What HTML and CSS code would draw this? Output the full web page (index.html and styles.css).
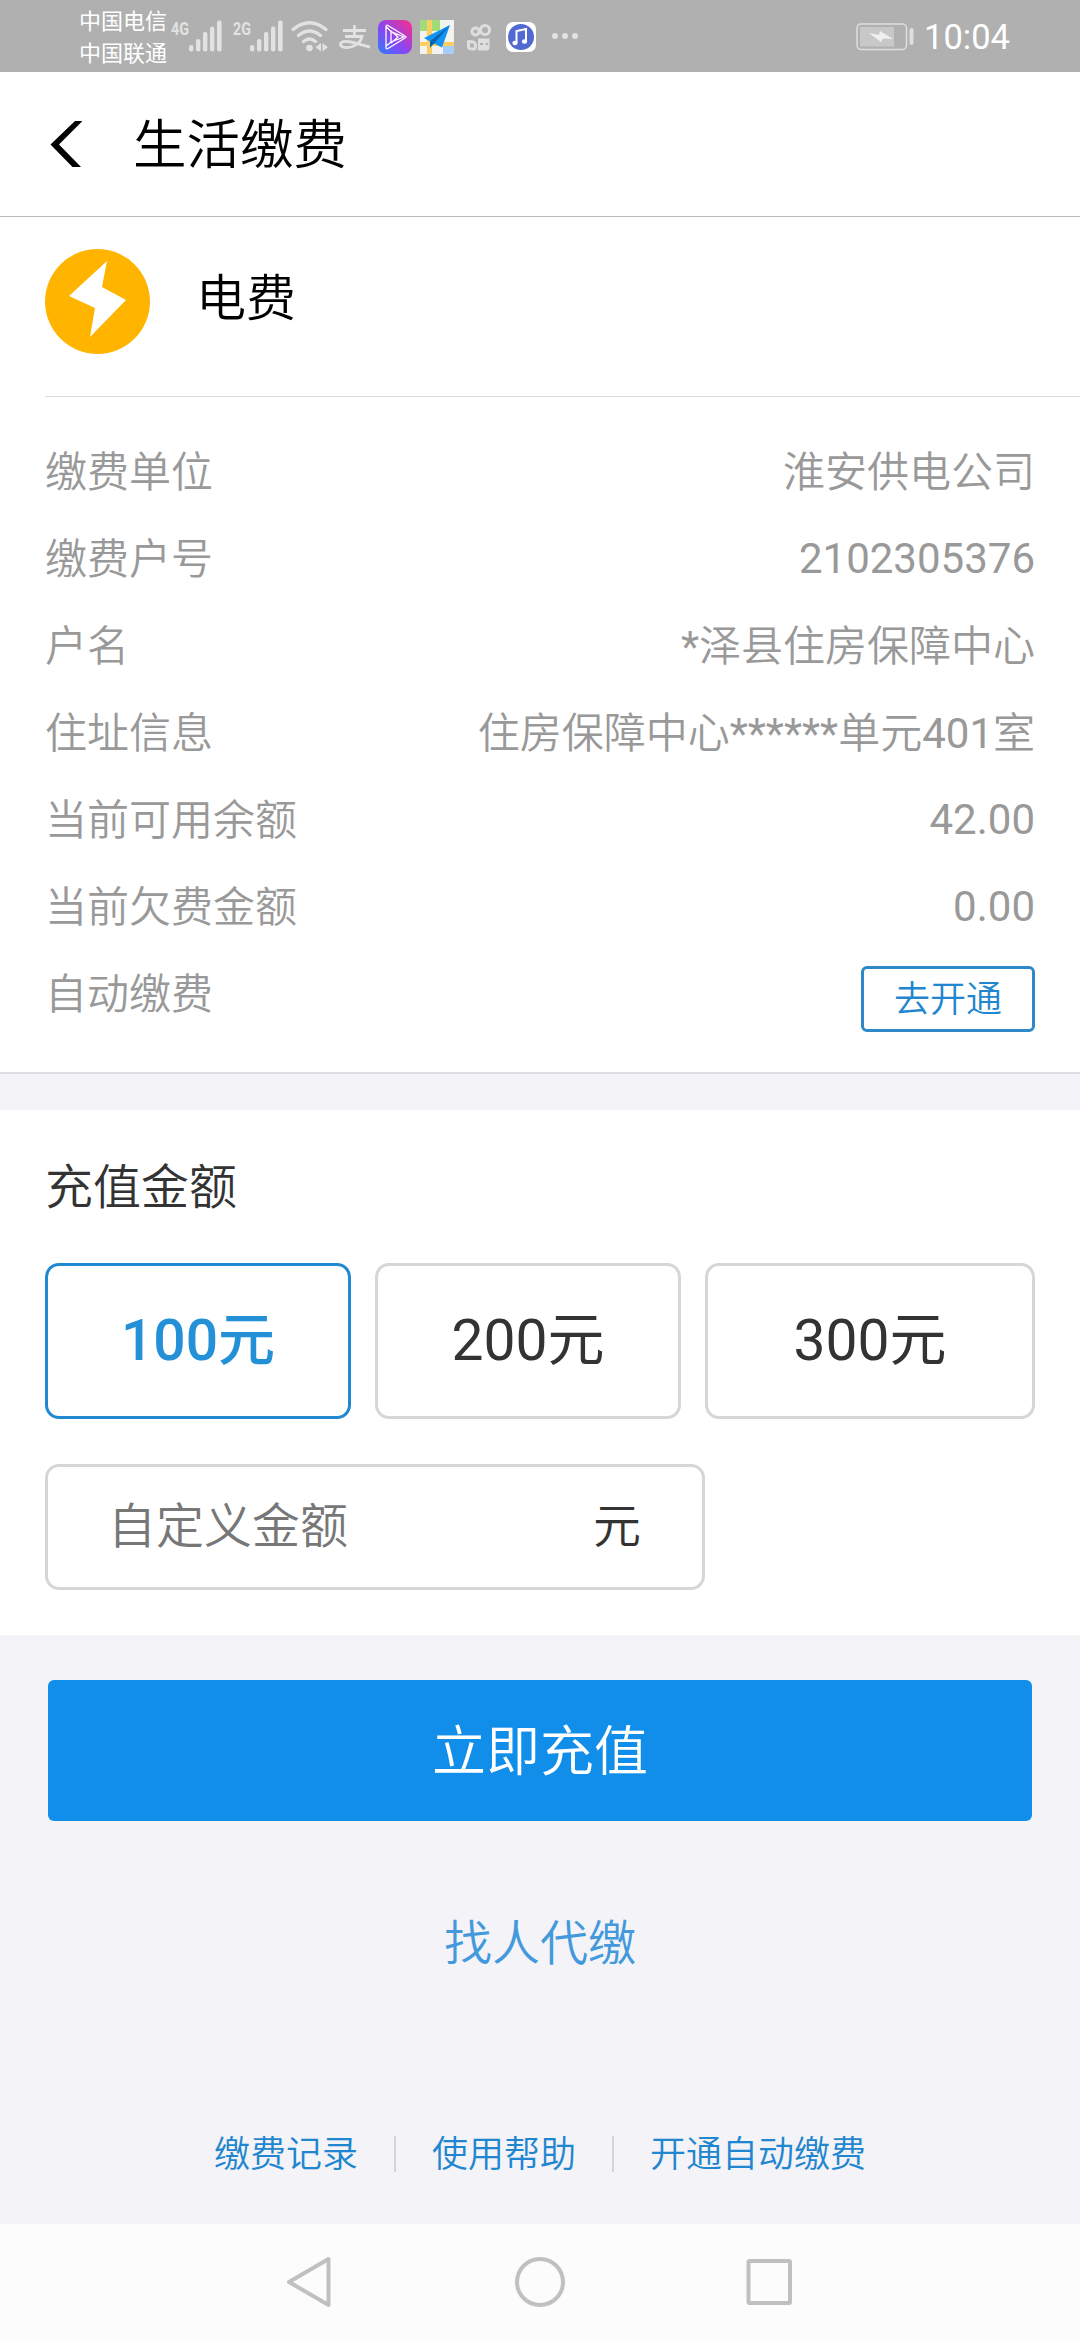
FILE: index.html
```html
<!DOCTYPE html>
<html lang="zh-CN">
<head>
<meta charset="utf-8">
<title>生活缴费</title>
<link rel="stylesheet" href="styles.css">
</head>
<body>
<div class="status">
  <div class="carriers"><span>中国电信</span><span>中国联通</span></div>
  <svg class="status-icons" width="420" height="72" viewBox="170 0 420 72">
    <g fill="#e2e2e2">
      <text class="net" x="171" y="35" textLength="18" lengthAdjust="spacingAndGlyphs">4G</text>
      <rect x="189" y="45" width="4.4" height="6.5" rx="2"/><rect x="196" y="39" width="4.4" height="12.5" rx="2"/><rect x="203" y="32" width="4.4" height="19.5" rx="2"/><rect x="210" y="26.500" width="4.4" height="25" rx="2"/><rect x="217" y="20.500" width="4.6" height="31" rx="2"/>
      <text class="net" x="233" y="35" textLength="18" lengthAdjust="spacingAndGlyphs">2G</text>
      <rect x="250" y="45" width="4.4" height="6.5" rx="2"/><rect x="257" y="39" width="4.4" height="12.500" rx="2"/><rect x="264" y="32" width="4.4" height="19.5" rx="2"/><rect x="271" y="26.500" width="4.4" height="25" rx="2"/><rect x="278" y="20.500" width="4.6" height="31" rx="2"/>
      <circle cx="309.500" cy="48" r="3.300"/>
      <path d="M321 43v8.500l-5.500-4.250zM322.500 43l5.500 4.250-5.500 4.250z"/>
      <circle cx="555" cy="36" r="3"/><circle cx="565" cy="36" r="3"/><circle cx="575" cy="36" r="3"/>
    </g>
    <g fill="none" stroke="#e2e2e2" stroke-width="3.400" stroke-linecap="round">
      <path d="M293 29.500q16.500-13.500 33 0M298.500 35.500q11-9 22 0M303.500 41.500q6-5 12 0"/>
      <path stroke-width="2.800" stroke-linecap="butt" d="M343 30.500h23M354.500 25v11M345 36.500h17C361 43 353 48 346 47.500c-8-.5-7-6.500 1-6 7 0 14 4 23 5.500"/>
    </g>
    <defs>
      <linearGradient id="vid" x1="0" y1="1" x2="1" y2="0"><stop offset="0" stop-color="#2f7bff"/><stop offset=".45" stop-color="#8a45f2"/><stop offset="1" stop-color="#ff2e86"/></linearGradient>
    </defs>
    <rect x="378" y="20" width="34" height="34" rx="8" fill="url(#vid)"/>
    <path d="M386 26.500q0-2 2-1l17 10.500q2 1 0 2l-17 10.500q-2 1-2-1zM386 46l5-4 13-5M391 31v12M386 26.500l5 5 13 5.500M391 31l7 6-7 6" fill="none" stroke="#fff" stroke-width="1.300"/>
    <rect x="420" y="20" width="34" height="34" fill="#f4f3ee"/>
    <path d="M420 20h20v11h-20z" fill="#a0dc78"/><path d="M443 44h11v10h-11z" fill="#a9cdfa"/>
    <path d="M427 20h5v34h-5zM420 42h34v4h-34z" fill="#fdce62"/>
    <path d="M450 25L424 38l6 3.500v6l4-4 8 4z" fill="#1292f5"/><path d="M450 25L430 41.500v6l4-4z" fill="#0763ad"/>
    <g fill="none" stroke="#dedede" stroke-width="3" stroke-linejoin="round">
      <circle cx="475.500" cy="31.500" r="3.600"/><circle cx="485" cy="30" r="4.600"/>
      <path d="M468.500 41.500l5 .5q2 1 2 4t-2 3q-5 0-5-1.500z"/>
    </g>
    <path d="M478 38.500h11.500v9q0 3-3 3H478z" fill="#dedede"/>
    <path d="M480 44h3M486 44h2" stroke="#b0b0b0" stroke-width="2"/>
    <rect x="506" y="22" width="30" height="30" rx="7" fill="#fff"/><circle cx="521" cy="37" r="13" fill="#5269d2"/>
    <path d="M516.500 43V31l9.500-2v12" fill="none" stroke="#fff" stroke-width="2"/><ellipse cx="515" cy="43" rx="2.600" ry="2.200" fill="#fff"/><ellipse cx="524.500" cy="41.500" rx="2.600" ry="2.200" fill="#fff"/>
  </svg>
  <svg class="battery" width="60" height="32" viewBox="855 20 60 32">
    <rect x="857" y="24" width="49.500" height="25.500" rx="4" fill="none" stroke="#dedede" stroke-width="1.500"/>
    <rect x="860" y="27" width="34" height="19.500" fill="#c8c8c8"/>
    <rect x="909.500" y="28" width="4" height="17" rx="2" fill="#dedede"/>
    <path d="M869 33l10 2 1-4 13 8-10-.5-2 3.500z" fill="#f0f0f0"/>
  </svg>
  <span class="time">10:04</span>
</div>
<header class="header">
  <svg class="back" width="32" height="48" viewBox="50 120 32 48"><path d="M75 121h7.500L59 144.500 81 167h-8.500L50.500 144.500z"/></svg>
  <h1>生活缴费</h1>
</header>
<main>
  <section class="account">
    <div class="service">
      <svg width="105" height="105" viewBox="0 0 105 105"><circle cx="52.500" cy="52.500" r="52.500" fill="#ffb400"/><path d="M62 12L24 47l26 12-5 29 36-37-24-13z" fill="#fff"/></svg>
      <h2>电费</h2>
    </div>
    <dl class="details">
      <div><dt>缴费单位</dt><dd>淮安供电公司</dd></div>
      <div><dt>缴费户号</dt><dd class="number">2102305376</dd></div>
      <div><dt>户名</dt><dd>*泽县住房保障中心</dd></div>
      <div><dt>住址信息</dt><dd>住房保障中心******单元401室</dd></div>
      <div><dt>当前可用余额</dt><dd class="number">42.00</dd></div>
      <div><dt>当前欠费金额</dt><dd class="number">0.00</dd></div>
      <div><dt>自动缴费</dt><dd><button class="enable">去开通</button></dd></div>
    </dl>
  </section>
  <section class="recharge">
    <h3>充值金额</h3>
    <div class="amounts">
      <button class="amount selected">100元</button>
      <button class="amount">200元</button>
      <button class="amount">300元</button>
    </div>
    <div class="custom"><span class="placeholder">自定义金额</span><span>元</span></div>
  </section>
  <button class="submit">立即充值</button>
  <a class="delegate">找人代缴</a>
  <nav class="links"><a>缴费记录</a><i></i><a>使用帮助</a><i></i><a>开通自动缴费</a></nav>
</main>
<footer class="navbar">
  <svg width="1080" height="116" viewBox="0 2224 1080 116" fill="none" stroke="#c0c0c0" stroke-width="4" stroke-linejoin="round">
    <path d="M328.500 2259v46L289 2282z"/><circle cx="540" cy="2282" r="23"/><rect x="748.500" y="2261" width="41.500" height="42" rx="1"/>
  </svg>
</footer>
</body>
</html>
```
FILE: styles.css
```css
* { box-sizing: border-box; }
body {
  margin: 0;
  width: 1080px;
  height: 2340px;
  display: flex;
  flex-direction: column;
  overflow: hidden;
  background: #f3f3f8;
  color: #333;
  font-family: Roboto, "Noto Sans CJK SC DemiLight", "Noto Sans CJK SC", sans-serif;
}
h1, h2, h3, dl, dt, dd { margin: 0; font-weight: 400; }
button { font: inherit; padding: 0; background: none; }

.status {
  height: 72px;
  flex: none;
  display: flex;
  align-items: center;
  background: #b0b0b0;
  color: #fff;
  padding-left: 79px;
}
.carriers {
  width: 91px;
  padding-bottom: 2px;
  display: flex;
  flex-direction: column;
  font-family: "Noto Sans CJK SC", sans-serif;
  font-size: 22px;
  line-height: 32px;
}
.status-icons { flex: none; }
.net { font: 700 19px Roboto, sans-serif; }
.battery { margin-left: 265px; }
.time { margin-left: 9px; padding-top: 3px; font-size: 34.5px; line-height: 69px; }

.header {
  height: 145px;
  flex: none;
  display: flex;
  align-items: center;
  padding-left: 50px;
  background: #fff;
  border-bottom: 1px solid #bbb;
  color: #000;
}
.header h1 { margin-left: 51px; padding-top: 3px; font-size: 53.5px; line-height: 80px; }

main { flex: 1; display: flex; flex-direction: column; }
.account { height: 857px; background: #fff; border-bottom: 2px solid #dcdce2; }
.service {
  height: 180px;
  margin-left: 45px;
  padding-top: 32px;
  display: flex;
  gap: 46px;
  border-bottom: 1px solid #ddd;
  color: #000;
}
.service h2 { font-size: 50px; line-height: 100px; }
.details { padding: 32px 45px 0; color: #999; font-size: 42px; line-height: 87px; }
.details div { height: 87px; display: flex; justify-content: space-between; }
.details .number { line-height: 85px; }
.enable {
  display: block;
  width: 174px;
  height: 66px;
  margin-top: 15px;
  border: 3px solid #2f88c8;
  border-radius: 6px;
  color: #1f86cf;
  font-size: 36px;
  line-height: 62px;
}

.recharge { height: 525px; margin-top: 36px; padding: 42px 45px 0; background: #fff; }
.recharge h3 { font-size: 48px; line-height: 72px; }
.amounts { margin-top: 39px; display: grid; grid-template-columns: 306px 306px 330px; gap: 24px; }
.amount {
  height: 156px;
  border: 3px solid #d6d6d6;
  border-radius: 14px;
  color: #333;
  font-family: Roboto, "Noto Sans CJK SC", sans-serif;
  font-size: 57px;
  line-height: 148px;
}
.amount.selected {
  border-color: #2188d2;
  color: #2490d8;
  font-family: Roboto, "Noto Sans CJK SC Medium", "Noto Sans CJK SC", sans-serif;
  font-weight: 500;
}
.custom {
  width: 660px;
  height: 126px;
  margin-top: 45px;
  padding: 0 61px 0 60px;
  display: flex;
  justify-content: space-between;
  border: 3px solid #d6d6d6;
  border-radius: 14px;
  font-size: 48px;
  line-height: 120px;
}
.placeholder { color: #777; }

.submit {
  width: 984px;
  height: 141px;
  margin: 45px 48px 0;
  padding-top: 4px;
  border: 0;
  border-radius: 6px;
  background: #118eea;
  color: #fff;
  font-size: 54px;
  line-height: 137px;
}
.delegate { margin-top: 87px; text-align: center; font-size: 48px; line-height: 72px; color: #4399db; }
.links {
  margin-top: 146px;
  display: flex;
  justify-content: center;
  align-items: center;
  gap: 36px;
  color: #1f86cf;
  font-size: 36px;
  line-height: 54px;
}
.links a { padding-top: 2px; }
.links i { width: 2px; height: 36px; background: #d4d4da; }
.navbar { height: 116px; flex: none; background: #fcfcfc; }
.navbar svg { display: block; }
```
